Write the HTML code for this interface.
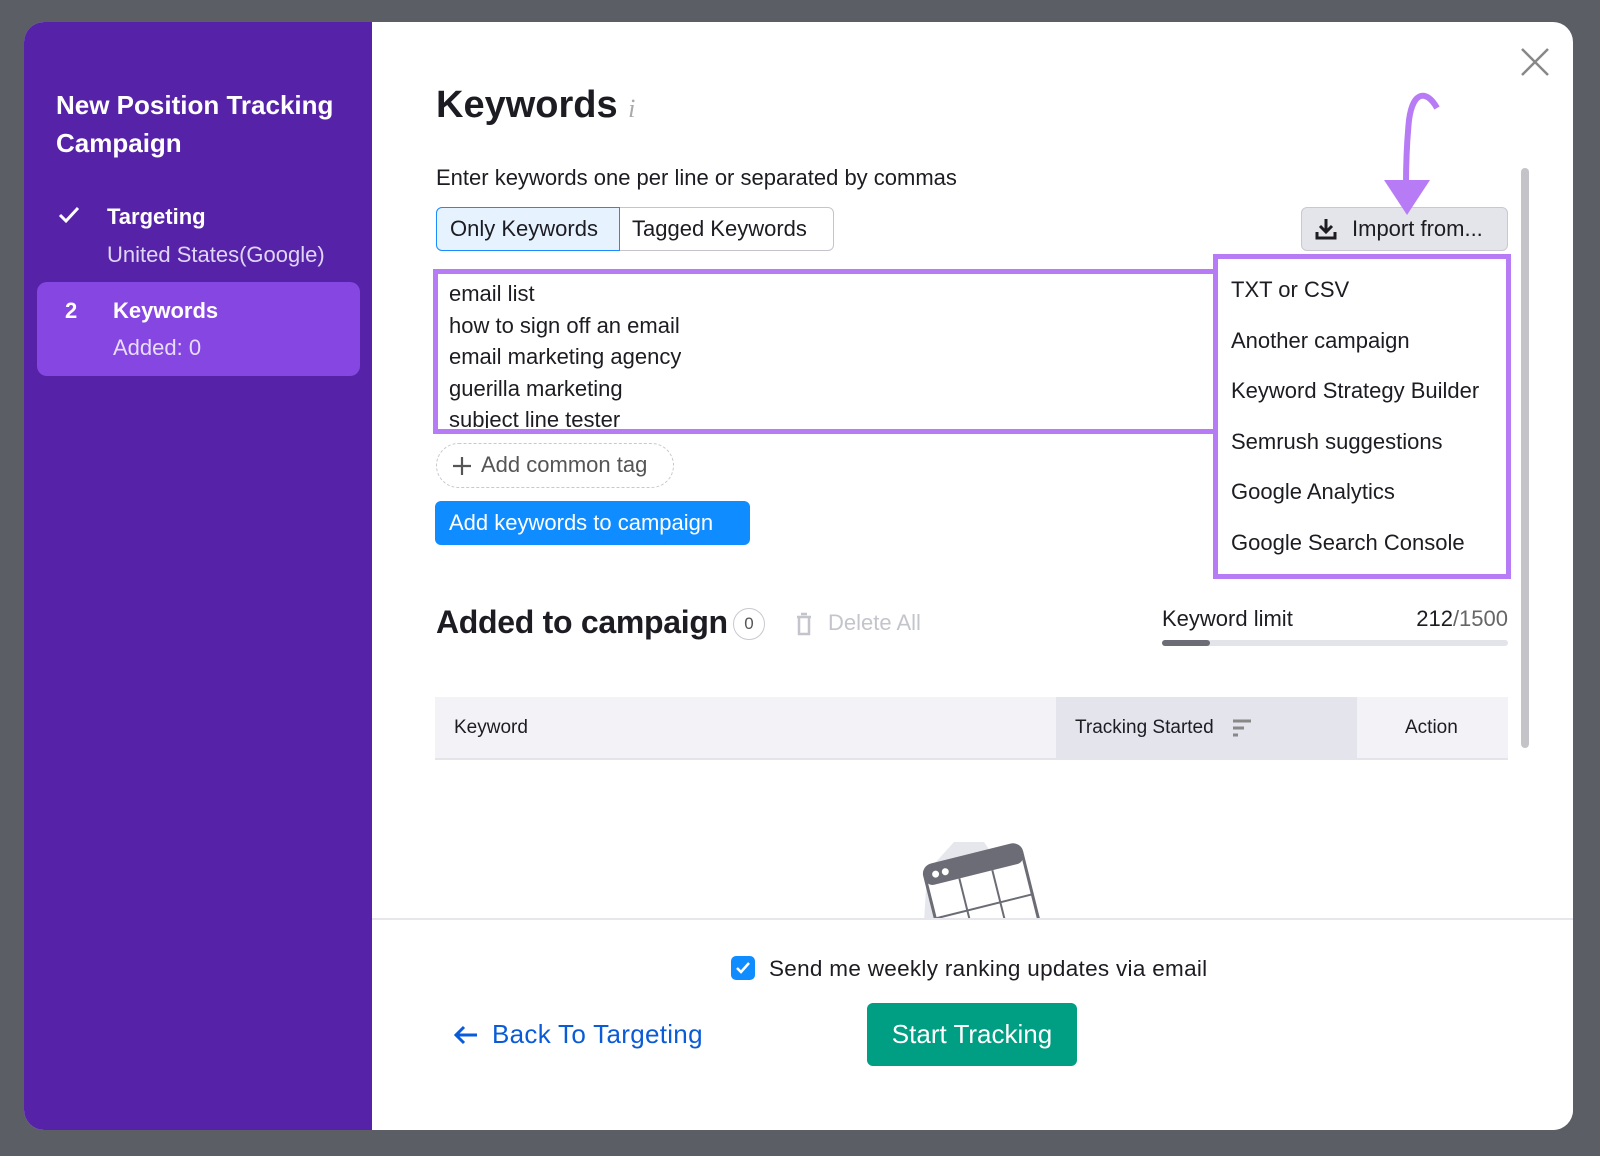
<!DOCTYPE html>
<html><head><meta charset="utf-8"><style>
*{box-sizing:border-box;margin:0;padding:0}
body{width:1600px;height:1156px;background:#5c5e66;font-family:"Liberation Sans",sans-serif;position:relative;overflow:hidden;color:#1c1c22}
.abs{position:absolute;white-space:nowrap}
#modal{position:absolute;left:24px;top:22px;width:1549px;height:1108px;background:#fff;border-radius:20px;overflow:hidden}
#side{position:absolute;left:0;top:0;width:348px;height:100%;background:#5623a8;z-index:5}
.w{color:#fff}
</style></head><body>
<div id="modal">
 <div id="side">
  <div class="abs w" style="left:32px;top:64px;font-size:26px;font-weight:bold;line-height:38px">New Position Tracking<br>Campaign</div>
  <svg class="abs" style="left:34px;top:184px" width="22" height="18"><path d="M2 9 L8 15 L20 2" stroke="#fff" stroke-width="3" fill="none"/></svg>
  <div class="abs w" style="left:83px;top:182px;font-size:22px;font-weight:bold">Targeting</div>
  <div class="abs" style="left:83px;top:220px;font-size:22px;color:#e0d4f7">United States(Google)</div>
  <div class="abs" style="left:13px;top:260px;width:323px;height:94px;background:#8646e2;border-radius:10px"></div>
  <div class="abs w" style="left:41px;top:276px;font-size:22px;font-weight:bold">2</div>
  <div class="abs w" style="left:89px;top:276px;font-size:22px;font-weight:bold">Keywords</div>
  <div class="abs" style="left:89px;top:313px;font-size:22px;color:#e8dcfb">Added: 0</div>
 </div>
 <svg class="abs" style="left:1496px;top:25px" width="30" height="30"><path d="M2 2 L28 28 M28 2 L2 28" stroke="#888" stroke-width="2.5"/></svg>
 <div class="abs" style="left:412px;top:62px;font-size:38px;font-weight:bold">Keywords <span style="font-family:'Liberation Serif',serif;font-style:italic;color:#aaa;font-size:26px;font-weight:normal">i</span></div>
 <div class="abs" style="left:412px;top:143px;font-size:22px">Enter keywords one per line or separated by commas</div>
 <div class="abs" style="left:412px;top:185px;width:398px;height:44px;border:1px solid #c4c5cc;border-radius:6px"></div>
 <div class="abs" style="left:412px;top:185px;width:184px;height:44px;border:1px solid #1a8cff;border-radius:6px 0 0 6px;background:#e6f3ff;font-size:22px;line-height:42px;padding-left:13px">Only Keywords</div>
 <div class="abs" style="left:608px;top:185px;font-size:22px;line-height:44px">Tagged Keywords</div>
 <div class="abs" style="left:1277px;top:185px;width:207px;height:44px;background:#e4e5ea;border:1px solid #c8c9d0;border-radius:6px;font-size:22px;line-height:42px;padding-left:50px">Import from...</div>
 <svg class="abs" style="left:1290px;top:195px" width="24" height="24"><path d="M12 2 V15 M6 9 L12 15 L18 9 M3 15 V21 H21 V15" stroke="#1c1c22" stroke-width="3" fill="none"/></svg>
 <svg class="abs" style="left:1327px;top:38px" width="120" height="160"><path d="M86 48 C76 30 62 30 58 60 C56 80 55 100 55 125" stroke="#b77cf5" stroke-width="6" fill="none"/><path d="M33 120 L79 120 L56 155 Z" fill="#b77cf5"/></svg>
 <div class="abs" style="left:409px;top:247px;width:790px;height:165px;border:5px solid #b77cf5;border-right:none;background:#fff"></div>
 <div class="abs" style="left:425px;top:256px;font-size:22px;line-height:31.6px;height:150px;overflow:hidden">email list<br>how to sign off an email<br>email marketing agency<br>guerilla marketing<br>subject line tester</div>
 <div class="abs" style="left:1189px;top:232px;width:298px;height:325px;border:5px solid #b77cf5;background:#fff;font-size:22px;padding-left:13px;line-height:50.6px;padding-top:6px">TXT or CSV<br>Another campaign<br>Keyword Strategy Builder<br>Semrush suggestions<br>Google Analytics<br>Google Search Console</div>
 <div class="abs" style="left:412px;top:421px;width:238px;height:45px;border:1.5px dashed #c8c9d0;border-radius:23px;font-size:22px;line-height:42px;padding-left:44px;color:#555">Add common tag</div>
 <svg class="abs" style="left:428px;top:434px" width="20" height="20"><path d="M10 1 V19 M1 10 H19" stroke="#555" stroke-width="2.2"/></svg>
 <div class="abs" style="left:411px;top:479px;width:315px;height:44px;background:#0f8cff;border-radius:6px;color:#fff;font-size:22px;line-height:44px;padding-left:14px">Add keywords to campaign</div>
 <div class="abs" style="left:412px;top:582px;font-size:32px;font-weight:bold;letter-spacing:-0.3px">Added to campaign</div>
 <div class="abs" style="left:709px;top:586px;width:32px;height:32px;border:1.5px solid #c8c9d0;border-radius:50%;font-size:17px;text-align:center;line-height:29px;color:#555">0</div>
 <svg class="abs" style="left:770px;top:589px" width="20" height="26"><path d="M3 6 H17 M7 3 H13 M5 6 V23 H15 V6" stroke="#c4c5cc" stroke-width="2.5" fill="none"/></svg>
 <div class="abs" style="left:804px;top:588px;font-size:22px;color:#c4c5cc">Delete All</div>
 <div class="abs" style="left:1138px;top:584px;font-size:22px">Keyword limit</div>
 <div class="abs" style="left:1360px;top:584px;width:124px;text-align:right;font-size:22px">212<span style="color:#666">/1500</span></div>
 <div class="abs" style="left:1138px;top:618px;width:346px;height:6px;background:#e3e4e9;border-radius:3px"></div>
 <div class="abs" style="left:1138px;top:618px;width:48px;height:6px;background:#6b6c75;border-radius:3px"></div>
 <div class="abs" style="left:411px;top:675px;width:1073px;height:63px;background:#f3f3f7;border-bottom:2px solid #e4e5ea"></div>
 <div class="abs" style="left:1032px;top:675px;width:301px;height:63px;background:#e4e5ec"></div>
 <div class="abs" style="left:430px;top:695px;font-size:19px">Keyword</div>
 <div class="abs" style="left:1051px;top:695px;font-size:19px">Tracking Started</div>
 <svg class="abs" style="left:1208px;top:696px" width="22" height="20"><path d="M1 3 H19 M1 10 H12 M1 17 H6" stroke="#888" stroke-width="3"/></svg>
 <div class="abs" style="left:1381px;top:695px;font-size:19px">Action</div>
 <div class="abs" style="left:1497px;top:146px;width:8px;height:580px;background:#c4c4c8;border-radius:4px"></div>
 <svg class="abs" style="left:875px;top:790px" width="160" height="110"><path d="M55 30 L85 30 L95 45 L118 65 L115 110 L25 110 L28 60 Z" fill="#e6e7ec"/><g transform="rotate(-14 80 75)"><rect x="30" y="42" width="100" height="90" rx="9" fill="#fff" stroke="#6b6c75" stroke-width="3"/><rect x="30" y="42" width="100" height="20" rx="7" fill="#6b6c75"/><circle cx="41" cy="52" r="3.5" fill="#fff"/><circle cx="51" cy="52" r="3.5" fill="#fff"/><path d="M63 62 V132 M97 62 V132 M30 95 H130" stroke="#6b6c75" stroke-width="2"/></g></svg>
 <div class="abs" style="left:348px;top:896px;width:1201px;height:212px;background:#fff;border-top:2px solid #e6e7ec"></div>
 <div class="abs" style="left:707px;top:934px;width:24px;height:24px;background:#0f8cff;border-radius:5px"></div>
 <svg class="abs" style="left:711px;top:939px" width="16" height="14"><path d="M2 7 L6 11 L14 2" stroke="#fff" stroke-width="2.5" fill="none"/></svg>
 <div class="abs" style="left:745px;top:934px;font-size:22.5px;letter-spacing:0.3px">Send me weekly ranking updates via email</div>
 <svg class="abs" style="left:429px;top:1002px" width="26" height="22"><path d="M24 11 H3 M11 3 L3 11 L11 19" stroke="#0a5bd8" stroke-width="3" fill="none"/></svg>
 <div class="abs" style="left:468px;top:997px;font-size:26px;color:#0a5bd8;letter-spacing:0.3px">Back To Targeting</div>
 <div class="abs" style="left:843px;top:981px;width:210px;height:63px;background:#009e82;border-radius:6px;color:#fff;font-size:26px;text-align:center;line-height:63px">Start Tracking</div>
</div>
</body></html>
